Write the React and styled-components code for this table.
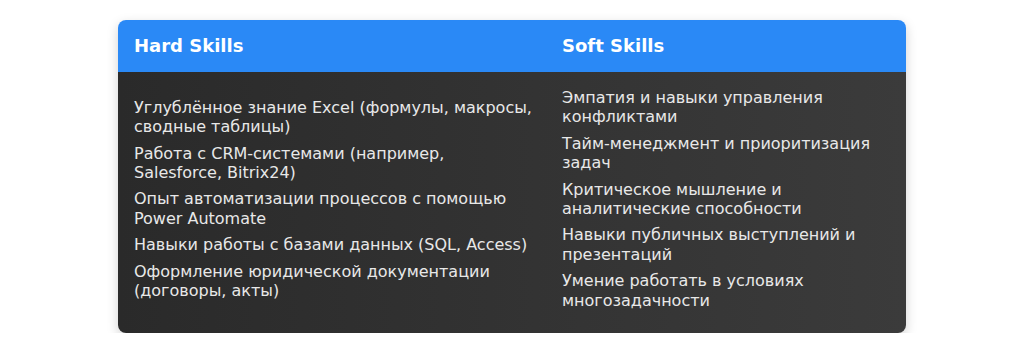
import React from 'react';
import styled, { createGlobalStyle } from 'styled-components';

const GlobalStyle = createGlobalStyle`
    html, body {
        margin: 0;
        padding: 0;
        background: #ffffff;
        font-family: "DejaVu Sans", "Noto Sans", sans-serif;
    }
`;

const Page = styled.div`
    padding: 20px 118px 0;
`;

const Card = styled.div`
    width: 788px;
    border-radius: 8px;
    overflow: hidden;
    box-shadow: 0 4px 12px rgba(0, 0, 0, 0.18);
`;

const Row = styled.div`
    display: grid;
    grid-template-columns: 428px 1fr;
    align-items: center;
`;

const HeadRow = styled(Row)`
    background: #2a89f6;
`;

const BodyRow = styled(Row)`
    background: linear-gradient(to right, #2a2a2a, #3b3b3b);
    height: 261px;
`;

const HeadCell = styled.div`
    padding: 16px;
    color: #ffffff;
    font-size: 18px;
    font-weight: bold;
    line-height: 20px;
`;

const BodyCell = styled.div`
    padding: 16px ${(p) => (p.$tight ? '12px' : '16px')} 16px 16px;
`;

const List = styled.ul`
    list-style: none;
    margin: 0;
    padding: 0;
`;

const Item = styled.li`
    color: #e8e8e8;
    font-size: 16px;
    line-height: 19.4px;
    margin-bottom: 7px;
`;

const hardSkills = [
    'Углублённое знание Excel (формулы, макросы, сводные таблицы)',
    'Работа с CRM-системами (например, Salesforce, Bitrix24)',
    'Опыт автоматизации процессов с помощью Power Automate',
    'Навыки работы с базами данных (SQL, Access)',
    'Оформление юридической документации (договоры, акты)',
];

const softSkills = [
    'Эмпатия и навыки управления конфликтами',
    'Тайм-менеджмент и приоритизация задач',
    'Критическое мышление и аналитические способности',
    'Навыки публичных выступлений и презентаций',
    'Умение работать в условиях многозадачности',
];

function App() {
    return (
        <Page>
            <GlobalStyle />
            <Card>
                <HeadRow>
                    <HeadCell>Hard Skills</HeadCell>
                    <HeadCell>Soft Skills</HeadCell>
                </HeadRow>
                <BodyRow>
                    <BodyCell $tight>
                        <List>
                            {hardSkills.map((s) => (
                                <Item key={s}>{s}</Item>
                            ))}
                        </List>
                    </BodyCell>
                    <BodyCell>
                        <List>
                            {softSkills.map((s) => (
                                <Item key={s}>{s}</Item>
                            ))}
                        </List>
                    </BodyCell>
                </BodyRow>
            </Card>
        </Page>
    );
}

export default App;
